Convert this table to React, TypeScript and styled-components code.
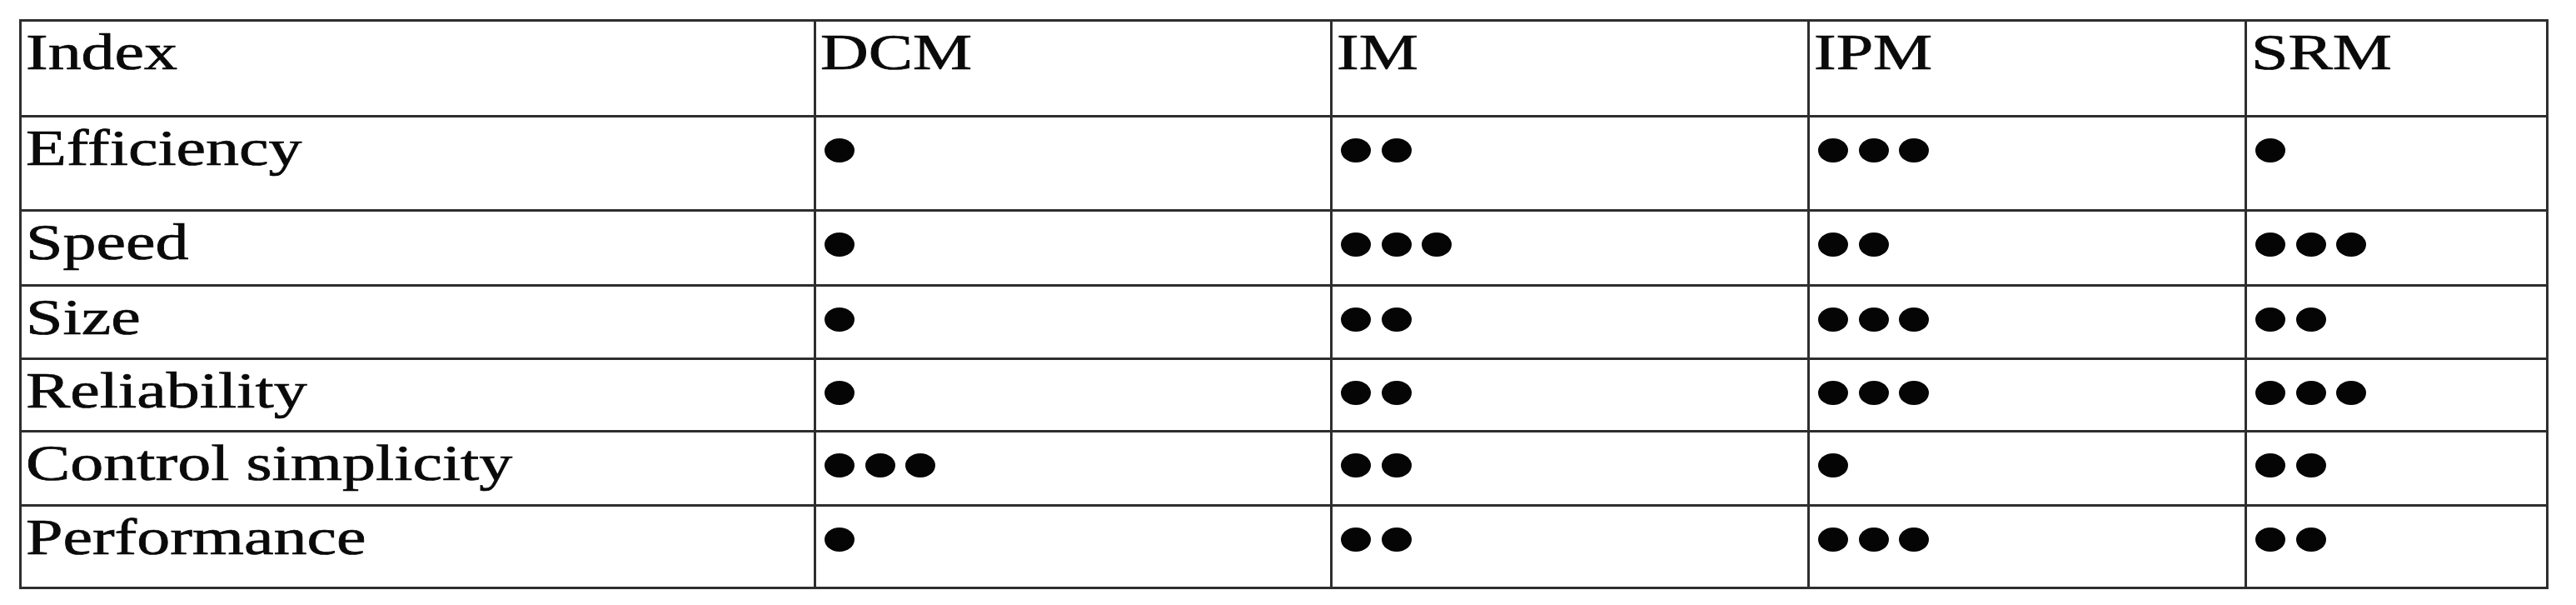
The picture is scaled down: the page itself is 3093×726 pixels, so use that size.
import React from 'react';
import styled, { createGlobalStyle } from 'styled-components';

const GlobalStyle = createGlobalStyle`
  html, body {
    margin: 0;
    padding: 0;
    background: #ffffff;
  }
  body {
    font-family: "Liberation Serif", "Times New Roman", serif;
    color: #0a0a0a;
  }
`;

const Page = styled.div`
  width: 3093px;
  height: 726px;
  padding: 22.5px 0 0 22.5px;
  box-sizing: border-box;
  background: #ffffff;
`;

// column and row sizes follow the ruled lines of the source table
const Table = styled.div`
  display: grid;
  grid-template-columns: 954px 620px 573px 525px 362.5px;
  grid-template-rows: 115.5px 113px 89.5px 88px 87px 89px 99.5px;
  width: max-content;
  border-left: 3px solid #2e2e2e;
  border-top: 3px solid #2e2e2e;
  filter: blur(0.5px);
`;

const Cell = styled.div`
  border-right: 3px solid #2e2e2e;
  border-bottom: 3px solid #2e2e2e;
  padding: 1px 0 0 5px;
  overflow: hidden;
`;

const Label = styled.span`
  display: inline-block;
  font-family: "Liberation Serif", "Times New Roman", serif;
  font-size: 62px;
  line-height: normal;
  white-space: nowrap;
  color: #0a0a0a;
  -webkit-text-stroke: 0.7px #0a0a0a;
  transform: scaleX(1.29);
  transform-origin: left top;
`;

const DotRow = styled.div`
  display: flex;
  gap: 12.5px;
  padding: 24px 0 0 5.5px;
`;

const Dot = styled.span`
  display: block;
  width: 36px;
  height: 29px;
  border-radius: 50%;
  background: #050505;
`;

interface RatingProps {
  level: number;
}

const Rating: React.FC<RatingProps> = ({ level }) => (
  <DotRow role="img" aria-label={`${level} of 3`}>
    {Array.from({ length: level }).map((_, i) => (
      <Dot key={i} />
    ))}
  </DotRow>
);

const motors = ['DCM', 'IM', 'IPM', 'SRM'];

const rows: { index: string; values: number[] }[] = [
  { index: 'Efficiency', values: [1, 2, 3, 1] },
  { index: 'Speed', values: [1, 3, 2, 3] },
  { index: 'Size', values: [1, 2, 3, 2] },
  { index: 'Reliability', values: [1, 2, 3, 3] },
  { index: 'Control simplicity', values: [3, 2, 1, 2] },
  { index: 'Performance', values: [1, 2, 3, 2] },
];

const App: React.FC = () => {
  return (
    <>
      <GlobalStyle />
      <Page>
        <Table>
          <Cell>
            <Label>Index</Label>
          </Cell>
          {motors.map(m => (
            <Cell key={m}>
              <Label>{m}</Label>
            </Cell>
          ))}
          {rows.map(row => (
            <React.Fragment key={row.index}>
              <Cell>
                <Label>{row.index}</Label>
              </Cell>
              {row.values.map((v, i) => (
                <Cell key={i}>
                  <Rating level={v} />
                </Cell>
              ))}
            </React.Fragment>
          ))}
        </Table>
      </Page>
    </>
  );
};

export default App;
